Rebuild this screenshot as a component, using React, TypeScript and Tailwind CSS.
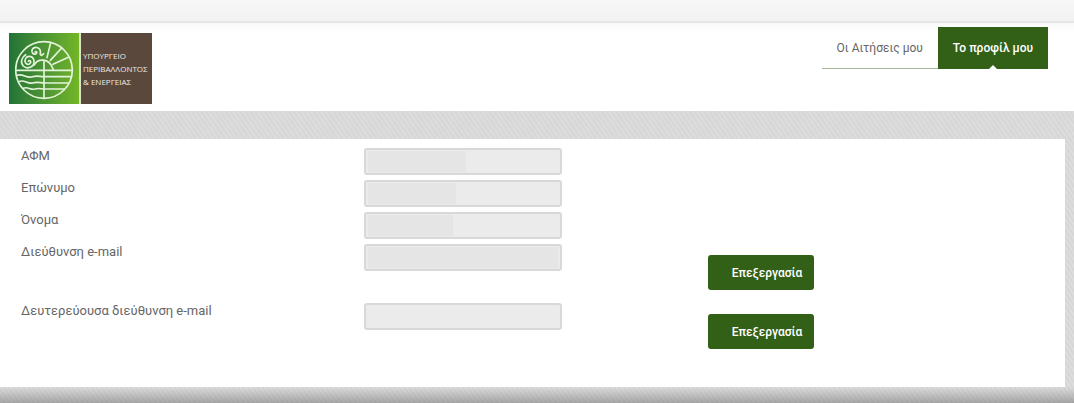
type Field = {
  id: string;
  label: string;
  mask?: string; // width of the hidden value
  editable?: boolean;
};

const fields: Field[] = [
  { id: "afm", label: "ΑΦΜ", mask: "w-[98px]" },
  { id: "surname", label: "Επώνυμο", mask: "w-[88px]" },
  { id: "name", label: "Όνομα", mask: "w-[85px]" },
  { id: "email", label: "Διεύθυνση e-mail", mask: "w-[190px]", editable: true },
  { id: "email2", label: "Δευτερεύουσα διεύθυνση e-mail", editable: true },
];

function Emblem() {
  return (
    <svg
      viewBox="0 0 192 192"
      className="h-16 w-16"
      fill="none"
      stroke="#e3f3d8"
      strokeWidth="5"
      strokeLinecap="round"
      aria-hidden="true"
    >
      <circle cx="87" cy="99" r="85" />
      <path d="M87 70V184M2 100H172" />
      {/* sun and rays */}
      <path d="M58 84C66 66 102 58 115 98M96 62L107 17M106 70L140 33M114 82L162 60" />
      {/* spirals */}
      <path d="M40 73C44 66 52 76 43 81C34 85 26 74 32 64C39 53 57 58 57 74C57 91 36 98 25 87C15 76 20 60 32 53" />
      <path d="M60 45C64 41 68 47 63 50C55 55 47 45 52 37C58 28 73 30 76 41C78 48 72 53 80 55L86 50" />
      {/* waves on the left, flat water on the right */}
      <path d="M6 115C24 108 32 124 50 120C66 114 74 119 87 119H169" />
      <path d="M11 134C28 126 36 142 53 138C68 133 76 138 87 138H161" />
      <path d="M25 154C38 147 46 160 60 156C72 152 78 156 87 156H148" />
    </svg>
  );
}

function Header() {
  return (
    <header className="flex h-[88px] items-start justify-between bg-gradient-to-b from-[#f9f9f9] to-white to-10% pl-[9px] pr-[26px]">
      <a href="#" className="mt-[10px] flex h-[71px] gap-0.5 bg-[#d8e5c0]">
        <span className="flex w-[70px] items-center bg-gradient-to-r from-[#217337] to-[#73b626] pl-[6px]">
          <Emblem />
        </span>
        <span className="flex w-[71px] items-center bg-[#5a483d] pl-[2px] font-['Open_Sans',sans-serif] text-[8px] leading-[13px] text-[#eee8e2]">
          <span className="whitespace-nowrap">
            ΥΠΟΥΡΓΕΙΟ
            <br />
            ΠΕΡΙΒΑΛΛΟΝΤΟΣ
            <br />
            &amp; ΕΝΕΡΓΕΙΑΣ
          </span>
        </span>
      </a>
      <nav className="mt-1 flex h-[42px] text-[12px] leading-[42px]">
        <a href="#" className="border-b border-[#a5b897] px-[15px] text-[#666]">
          Οι Αιτήσεις μου
        </a>
        <a href="#" aria-current="page" className="relative bg-[#336017] px-[15px] font-medium text-white">
          Το προφίλ μου
          <span className="absolute bottom-0 left-1/2 -ml-1 border-x-4 border-b-4 border-x-transparent border-b-white" />
        </a>
      </nav>
    </header>
  );
}

function Row({ field }: { field: Field }) {
  return (
    <div className={`grid grid-cols-3 items-start ${field.editable ? "h-[59px]" : "h-8"}`}>
      <label htmlFor={field.id} className="leading-4">
        {field.label}
      </label>
      <div className="relative">
        <input
          id={field.id}
          type="text"
          readOnly
          className="block h-[27px] w-[198px] rounded-[3px] border-2 border-[#d8d8d8] bg-[#ebebeb] px-1 outline-none"
        />
        {field.mask && <span className={`absolute left-1 top-[3px] h-[21px] bg-[#e5e5e5] ${field.mask}`} />}
      </div>
      {field.editable && (
        <button
          type="button"
          className="mt-[11px] h-[35px] w-[106px] cursor-pointer rounded-[3px] bg-[#336017] pl-6 text-left text-[12px] font-medium text-white"
        >
          Επεξεργασία
        </button>
      )}
    </div>
  );
}

export default function App() {
  return (
    <div className="flex min-h-screen flex-col bg-white font-[Roboto,sans-serif] text-[13px] text-[#666]">
      <div className="h-[23px] border-b-2 border-[#e6e6e6] bg-gradient-to-b from-[#f7f7f7] to-[#f2f2f2]" />
      <Header />
      <main className="flex flex-1 flex-col bg-[#dadada] bg-[repeating-linear-gradient(55deg,#d5d5d5_0px,#dedede_2px,#d5d5d5_4px)] pt-7">
        <form className="mr-[9px] bg-white pb-[25px] pl-[21px] pr-[14px] pt-[9px]">
          {fields.map((f) => (
            <Row key={f.id} field={f} />
          ))}
        </form>
        <div className="min-h-4 flex-1 bg-gradient-to-b from-transparent to-black/25" />
      </main>
    </div>
  );
}
